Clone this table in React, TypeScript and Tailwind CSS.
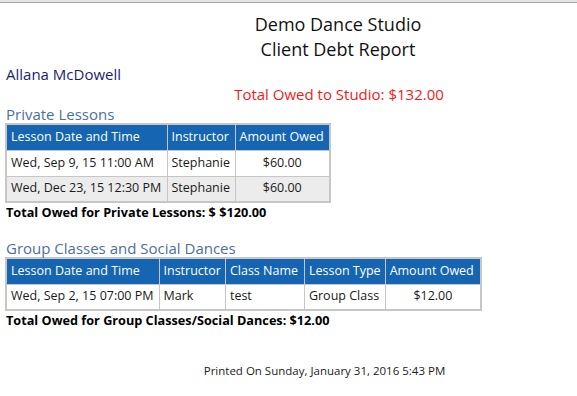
import React from 'react';

type Column = { label: string; width: string; align?: 'left' | 'center' };

const privateColumns: Column[] = [
  { label: 'Lesson Date and Time', width: 'w-[161px]' },
  { label: 'Instructor', width: 'w-[68px]' },
  { label: 'Amount Owed', width: 'w-[95px]', align: 'center' },
];

const privateRows = [
  ['Wed, Sep 9, 15 11:00 AM', 'Stephanie', '$60.00'],
  ['Wed, Dec 23, 15 12:30 PM', 'Stephanie', '$60.00'],
];

const groupColumns: Column[] = [
  { label: 'Lesson Date and Time', width: 'w-[153px]' },
  { label: 'Instructor', width: 'w-[66px]' },
  { label: 'Class Name', width: 'w-[79px]' },
  { label: 'Lesson Type', width: 'w-[80px]' },
  { label: 'Amount Owed', width: 'w-[96px]', align: 'center' },
];

const groupRows = [['Wed, Sep 2, 15 07:00 PM', 'Mark', 'test', 'Group Class', '$12.00']];

function DebtTable({ columns, rows }: { columns: Column[]; rows: string[][] }) {
  return (
    <table className="ml-[5px] border-collapse border-2 border-[#c6c6c6] table-fixed text-[12.5px]">
      <thead>
        <tr className="h-[26px] bg-[#1565b2] text-white">
          {columns.map((col) => (
            <th
              key={col.label}
              className={`${col.width} border border-[#c6c6c6] px-1 text-left font-normal whitespace-nowrap overflow-hidden`}
            >
              {col.label}
            </th>
          ))}
        </tr>
      </thead>
      <tbody>
        {rows.map((row, i) => (
          <tr key={i} className={`h-[26px] text-[#1a1a1a] ${i % 2 === 1 ? 'bg-[#ececec]' : 'bg-white'}`}>
            {row.map((cell, j) => (
              <td
                key={j}
                className={`border border-[#c6c6c6] px-1 whitespace-nowrap overflow-hidden ${
                  columns[j].align === 'center' ? 'text-center' : 'text-left'
                }`}
              >
                {cell}
              </td>
            ))}
          </tr>
        ))}
      </tbody>
    </table>
  );
}

export default function App() {
  return (
    <div className="w-[577px] h-[396px] overflow-hidden bg-white font-['Segoe_UI','Open_Sans',sans-serif] text-black">
      {/* window chrome line */}
      <div className="h-[3px] bg-[#e4e4e4] border-b border-[#a6a6a6]" />

      <div className="w-[676px] text-center mt-[9px] text-[18px] leading-[25px] text-[#111]">
        <div>Demo Dance Studio</div>
        <div>Client Debt Report</div>
      </div>

      <div className="pl-[6px] text-[15px] leading-[20px] mt-[2px] text-[#1c1c78]">Allana McDowell</div>
      <div className="w-[678px] text-center text-[15px] leading-[20px] text-[#f21b1b]">
        Total Owed to Studio: $132.00
      </div>

      <div className="pl-[6px] text-[15px] leading-[18px] mt-[1px] text-[#4b6ea8]">Private Lessons</div>
      <DebtTable columns={privateColumns} rows={privateRows} />
      <div className="pl-[6px] text-[12.7px] leading-[18px] font-bold">Total Owed for Private Lessons: $ $120.00</div>

      <div className="pl-[6px] text-[15px] leading-[18px] mt-[18px] text-[#4b6ea8]">
        Group Classes and Social Dances
      </div>
      <DebtTable columns={groupColumns} rows={groupRows} />
      <div className="pl-[6px] text-[12.7px] leading-[18px] font-bold">
        Total Owed for Group Classes/Social Dances: $12.00
      </div>

      <div className="w-[649px] text-center mt-[33px] text-[11.5px] leading-[18px] text-[#222]">
        Printed On Sunday, January 31, 2016 5:43 PM
      </div>
    </div>
  );
}
